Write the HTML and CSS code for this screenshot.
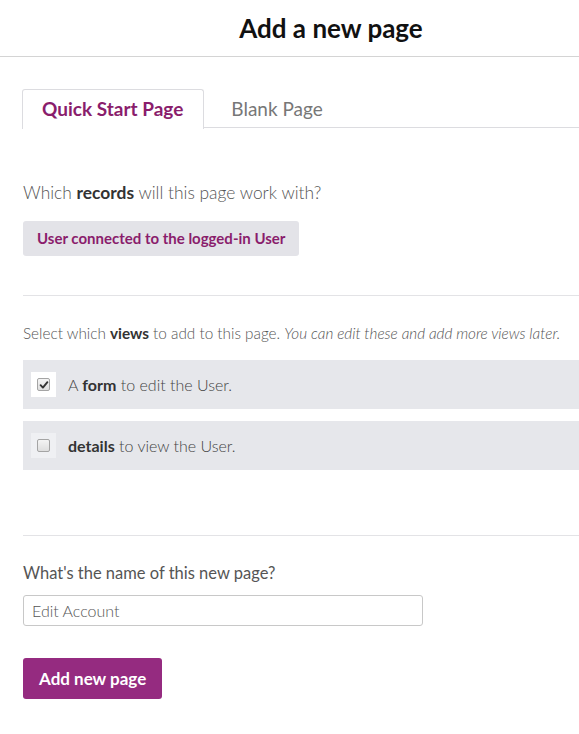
FILE: index.html
```html
<!DOCTYPE html>
<html>
<head>
<meta charset="utf-8">
<link rel="stylesheet" href="styles.css">
</head>
<body>
<div class="page">
  <header class="header"><h1 class="title">Add a new page</h1></header>
  <main class="content">
    <ul class="tabs">
      <li class="tab tab-active">Quick Start Page</li>
      <li class="tab">Blank Page</li>
    </ul>
    <section class="section section-records">
      <p class="text">Which <b>records</b> will this page work with?</p>
      <div class="record-btn">User connected to the logged-in User</div>
    </section>
    <hr class="divider">
    <section class="section section-views">
      <p class="text text-small">Select which <b>views</b> to add to this page. <i>You can edit these and add more views later.</i></p>
      <div class="views">
        <label class="view-row">
          <span class="check-box">
            <span class="check check-on"><svg class="tick" viewBox="0 0 10 10" width="10" height="10"><path d="M1.6 5.2 L3.9 7.6 L8.4 2.2" fill="none" stroke="#333" stroke-width="1.9" stroke-linecap="round" stroke-linejoin="round"/></svg></span>
          </span>
          <span class="view-text">A <b>form</b> to edit the User.</span>
        </label>
        <label class="view-row">
          <span class="check-box check-box-muted"><span class="check"></span></span>
          <span class="view-text"><b>details</b> to view the User.</span>
        </label>
      </div>
    </section>
    <hr class="divider divider-wide">
    <section class="section section-name">
      <p class="label">What's the name of this new page?</p>
      <input class="name-input" type="text" value="Edit Account">
      <button class="submit">Add new page</button>
    </section>
  </main>
</div>
</body>
</html>
```
FILE: styles.css
```css
html, body {
  margin: 0;
  padding: 0;
  overflow: hidden;
  background: #fff;
}
body {
  font-family: Lato, "Open Sans", sans-serif;
  color: #555;
}
.page {
  width: 662px;
}
.header {
  height: 56px;
  border-bottom: 1px solid #d4d4d4;
  display: flex;
  align-items: center;
  justify-content: center;
}
.title {
  margin: 0;
  font-size: 26px;
  font-weight: 700;
  color: #111;
}
.content {
  padding: 32px 0 0 23px;
}
.tabs {
  list-style: none;
  margin: 0 0 0 -1px;
  padding: 0;
  display: flex;
  border-bottom: 1px solid #dcdce0;
  height: 38px;
}
.tab {
  padding: 0 19px;
  line-height: 38px;
  font-size: 19px;
  color: #777;
  border: 1px solid transparent;
  border-bottom: none;
  margin-right: 7px;
}
.tab-active {
  color: #8a1d6c;
  font-weight: 700;
  border-color: #dcdce0;
  border-radius: 3px 3px 0 0;
  background: #fff;
  height: 39px;
  padding: 0 20px 0 19px;
}
.section {
  margin: 0;
}
.text, .label {
  margin: 0;
  font-size: 17.4px;
  line-height: 20px;
  font-weight: 300;
  color: #555;
}
.text-small {
  font-size: 15.3px;
}
.text b, .view-text b {
  font-weight: 700;
  color: #333;
}
.section-records {
  padding-top: 55px;
}
.record-btn {
  display: inline-block;
  margin-top: 18px;
  background: #e3e3e8;
  color: #8a1d6c;
  font-weight: 700;
  font-size: 15px;
  line-height: 35px;
  padding: 0 14px;
  border-radius: 3px;
}
.divider {
  border: none;
  border-top: 1px solid #e3e3e6;
  margin: 39px 0 0 0;
}
.divider-wide {
  margin-top: 65px;
}
.section-views {
  padding-top: 27px;
}
.views {
  margin-top: 17px;
  display: flex;
  flex-direction: column;
  gap: 12px;
}
.view-row {
  display: flex;
  align-items: center;
  height: 49px;
  background: #e6e7eb;
  padding-left: 8px;
}
.check-box {
  width: 25px;
  height: 25px;
  background: #fff;
  display: flex;
  align-items: center;
  justify-content: center;
}
.check-box-muted {
  background: #eff0f3;
}
.check {
  width: 11px;
  height: 11px;
  border: 1px solid #a4a4a4;
  border-radius: 2px;
  background: linear-gradient(#f4f4f4, #dedede);
  display: flex;
  align-items: center;
  justify-content: center;
}
.tick {
  display: block;
}
.view-text {
  margin-left: 12px;
  font-size: 16px;
  font-weight: 300;
  color: #444;
}
.section-name {
  padding-top: 27px;
  display: flex;
  flex-direction: column;
  align-items: flex-start;
}
.label {
  font-size: 16.5px;
  font-weight: 400;
}
.name-input {
  margin-top: 12px;
  width: 400px;
  height: 31px;
  box-sizing: border-box;
  border: 1px solid #c8c8c8;
  border-radius: 3px;
  padding: 0 8px;
  font-family: Lato, sans-serif;
  font-size: 16px;
  font-weight: 300;
  color: #555;
}
.submit {
  margin-top: 32px;
  height: 41px;
  padding: 0 16px;
  border: none;
  border-radius: 3px;
  background: #952b80;
  color: #fff;
  font-family: Lato, sans-serif;
  font-size: 17px;
  font-weight: 700;
}
```
